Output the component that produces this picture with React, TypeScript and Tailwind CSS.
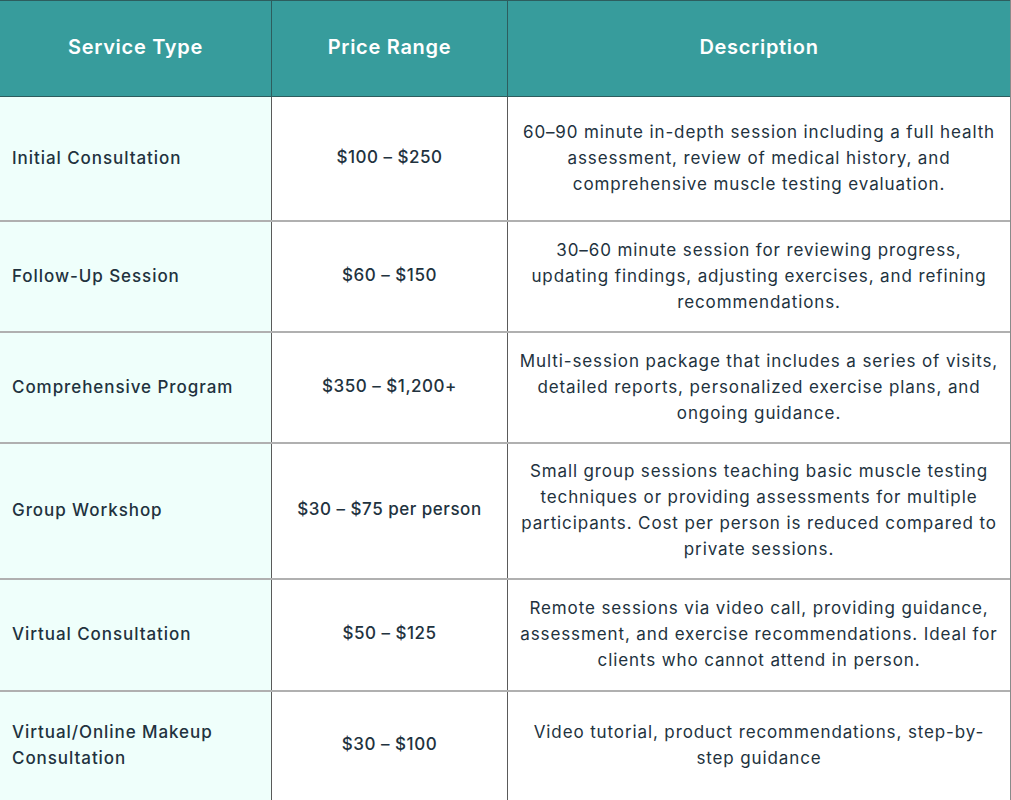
import React from "react"

const rows = [
  {
    service: "Initial Consultation",
    price: "$100 – $250",
    desc: "60–90 minute in-depth session including a full health assessment, review of medical history, and comprehensive muscle testing evaluation.",
    h: "h-[123px]",
  },
  {
    service: "Follow-Up Session",
    price: "$60 – $150",
    desc: "30–60 minute session for reviewing progress, updating findings, adjusting exercises, and refining recommendations.",
    h: "h-[111px]",
  },
  {
    service: "Comprehensive Program",
    price: "$350 – $1,200+",
    desc: "Multi-session package that includes a series of visits, detailed reports, personalized exercise plans, and ongoing guidance.",
    h: "h-[111px]",
  },
  {
    service: "Group Workshop",
    price: "$30 – $75 per person",
    desc: "Small group sessions teaching basic muscle testing techniques or providing assessments for multiple participants. Cost per person is reduced compared to private sessions.",
    h: "h-[136px]",
  },
  {
    service: "Virtual Consultation",
    price: "$50 – $125",
    desc: "Remote sessions via video call, providing guidance, assessment, and exercise recommendations. Ideal for clients who cannot attend in person.",
    h: "h-[112px]",
  },
  {
    service: "Virtual/Online Makeup Consultation",
    price: "$30 – $100",
    desc: "Video tutorial, product recommendations, step-by-step guidance",
    h: "h-[110px]",
  },
]

export default function App() {
  return (
    <div className="w-[1011px] h-[800px] bg-white font-['Inter',sans-serif] text-[#22323e]">
      <div className="border-r border-b border-[#8a8a8a]">
        <div className="grid grid-cols-[272px_236px_1fr] h-[97px] bg-[#379c9c] border-t border-b border-[#2d5d5e] text-white text-[20px] tracking-[0.035em] font-semibold">
          <div className="flex items-center justify-center pb-1 border-r border-[#2d5d5e]">Service Type</div>
          <div className="flex items-center justify-center pb-1 border-r border-[#2d5d5e]">Price Range</div>
          <div className="flex items-center justify-center pb-1">Description</div>
        </div>
        {rows.map((r, i) => (
          <div
            key={r.service}
            className={`grid grid-cols-[272px_236px_1fr] ${r.h} ${i > 0 ? "border-t-2 border-[#b0b0b0]" : ""}`}
          >
            <div className="flex items-center bg-[#effffb] border-r border-[#5a5a5a] pl-3 pr-6 pb-0.5 text-[17px] tracking-[0.055em] font-medium leading-[26px]">
              {r.service}
            </div>
            <div className="flex items-center justify-center border-r border-[#5a5a5a] pb-0.5 text-[17px] tracking-[0.03em] font-medium">
              {r.price}
            </div>
            <div className="flex items-center justify-center px-[10px] pb-0.5 text-center text-[17px] tracking-[0.052em] leading-[26px]">
              {r.desc}
            </div>
          </div>
        ))}
      </div>
    </div>
  )
}
